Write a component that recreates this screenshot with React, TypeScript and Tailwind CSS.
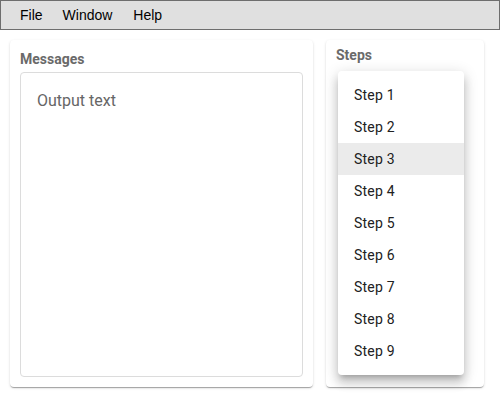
// Messages + Steps panel with open step menu
const steps = ["Step 1", "Step 2", "Step 3", "Step 4", "Step 5", "Step 6", "Step 7", "Step 8", "Step 9"];

export default function App() {
  return (
    <div className="w-[500px] h-[400px] bg-white flex flex-col font-['Roboto',sans-serif]">
      {/* ── Menu bar ── */}
      <div className="h-[30px] bg-[#e0e0e0] border border-[#6e6e6e] flex items-center pl-[19px] gap-[20px] text-[14px] text-black font-['Liberation_Sans',Arial,sans-serif]">
        <span>File</span>
        <span>Window</span>
        <span className="ml-[1px]">Help</span>
      </div>

      {/* ── Panels ── */}
      <div className="flex gap-[13px] px-[10px] pt-[10px]">
        <div className="w-[303px] h-[347px] bg-white rounded-[4px] shadow-[0_2px_1px_-1px_rgba(0,0,0,0.2),0_1px_1px_0_rgba(0,0,0,0.14),0_1px_3px_0_rgba(0,0,0,0.12)] flex flex-col px-[10px] pb-[10px]">
          <div className="h-[32px] flex items-end pb-[2px] text-[14px] font-bold text-[#6a6a6a]">Messages</div>
          <div className="flex-1 border border-[#dcdcdc] rounded-[4px] px-[16px] pt-[16px] text-[16px] text-[#666]">
            Output text
          </div>
        </div>

        <div className="relative w-[158px] h-[347px] bg-white rounded-[4px] shadow-[0_2px_1px_-1px_rgba(0,0,0,0.2),0_1px_1px_0_rgba(0,0,0,0.14),0_1px_3px_0_rgba(0,0,0,0.12)] px-[10px]">
          <div className="h-[26px] flex items-end text-[14px] font-bold text-[#6a6a6a]">Steps</div>

          {/* open menu */}
          <div className="absolute left-[12px] top-[31px] w-[126px] bg-white rounded-[4px] py-[8px] shadow-[0_5px_5px_-3px_rgba(0,0,0,0.2),0_8px_10px_1px_rgba(0,0,0,0.14),0_3px_14px_2px_rgba(0,0,0,0.12)]">
            {steps.map((s) => (
              <div
                key={s}
                className={`h-[32px] flex items-center px-[16px] text-[14px] text-[#212121] tracking-[0.2px] ${s === "Step 3" ? "bg-[#ebebeb]" : ""}`}
              >
                {s}
              </div>
            ))}
          </div>
        </div>
      </div>
    </div>
  );
}
